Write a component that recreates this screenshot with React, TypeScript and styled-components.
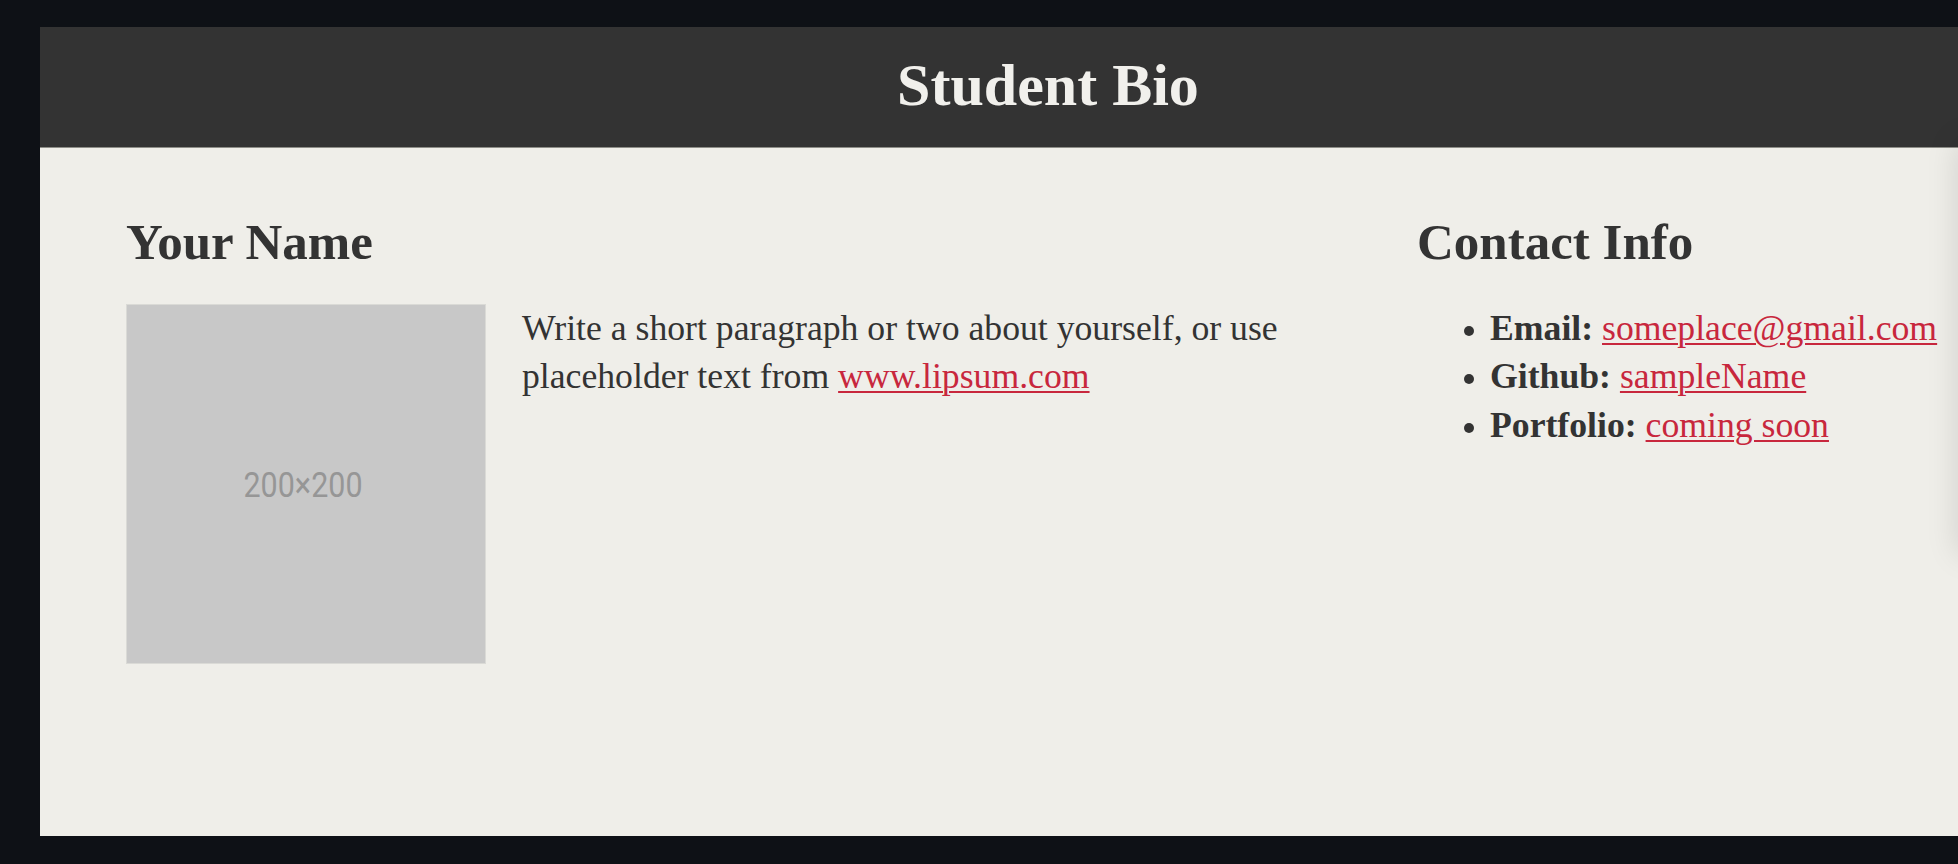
import React from "react";
import styled, { createGlobalStyle } from "styled-components";

const GlobalStyle = createGlobalStyle`
  html, body {
    margin: 0;
    padding: 0;
    background: #0e1116;
    overflow: hidden;
  }
  #root {
    padding: 27px 0 0 40px;
  }
`;

const serif = `"Liberation Serif", "Times New Roman", serif`;

const Panel = styled.div`
  position: relative;
  width: 2016px;
  height: 809px;
  background: #efeee9;
  font-family: ${serif};
  color: #333333;
`;

const Header = styled.header`
  box-sizing: border-box;
  height: 121px;
  padding-bottom: 4px;
  background: #333333;
  border-bottom: 1px solid #8e8e88;
  display: flex;
  align-items: center;
  justify-content: center;
`;

const Title = styled.h1`
  margin: 0;
  font-size: 60px;
  line-height: 60px;
  font-weight: 700;
  color: #f1f0ec;
`;

const Content = styled.main`
  display: grid;
  grid-template-columns: 1291px 1fr;
  padding: 64px 86px 0;
`;

const Column = styled.section`
  display: flex;
  flex-direction: column;
`;

const SectionTitle = styled.h2`
  margin: 0 0 31px;
  font-size: 51px;
  line-height: 61px;
  font-weight: 700;
  color: #333333;
`;

const BioRow = styled.div`
  display: flex;
  align-items: flex-start;
  gap: 36px;
`;

const Photo = styled.svg`
  flex: none;
  display: block;
  width: 360px;
  height: 360px;
`;

const Paragraph = styled.p`
  margin: 0;
  width: 880px;
  font-size: 35.7px;
  line-height: 48px;
  color: #333333;
`;

const Link = styled.a`
  color: #c8273d;
  text-decoration: underline;
  text-decoration-thickness: 2px;
  text-underline-offset: 3px;
`;

const ContactList = styled.ul`
  margin: 0;
  padding-left: 73px;
  font-size: 35.7px;
  line-height: 48.3px;
  list-style: disc;
  color: #333333;
`;

const ContactItem = styled.li`
  &::marker {
    font-size: 32px;
  }
`;

const Label = styled.strong`
  font-weight: 700;
`;

const EdgeShadow = styled.div`
  position: absolute;
  left: 1924px;
  top: 121px;
  width: 200px;
  height: 400px;
  background: #efeee9;
  box-shadow: 0 0 30px 6px rgba(0, 0, 0, 0.13);
`;

export default function App() {
  return (
    <>
      <GlobalStyle />
      <Panel>
        <Header>
          <Title>Student Bio</Title>
        </Header>
        <Content>
          <Column>
            <SectionTitle>Your Name</SectionTitle>
            <BioRow>
              <Photo viewBox="0 0 360 360">
                <rect x="0.5" y="0.5" width="359" height="359" fill="#c8c8c8" stroke="#dadad6" strokeWidth="1" />
                <text
                  x="177"
                  y="193"
                  textAnchor="middle"
                  fontFamily="Roboto, 'DejaVu Sans', sans-serif"
                  fontSize="35"
                  fill="#969696"
                  textLength="119"
                  lengthAdjust="spacingAndGlyphs"
                >
                  200×200
                </text>
              </Photo>
              <Paragraph>
                Write a short paragraph or two about yourself, or use placeholder text from{" "}
                <Link href="#">www.lipsum.com</Link>
              </Paragraph>
            </BioRow>
          </Column>
          <Column>
            <SectionTitle>Contact Info</SectionTitle>
            <ContactList>
              <ContactItem>
                <Label>Email:</Label> <Link href="#">someplace@gmail.com</Link>
              </ContactItem>
              <ContactItem>
                <Label>Github:</Label> <Link href="#">sampleName</Link>
              </ContactItem>
              <ContactItem>
                <Label>Portfolio:</Label> <Link href="#">coming soon</Link>
              </ContactItem>
            </ContactList>
          </Column>
        </Content>
        <EdgeShadow />
      </Panel>
    </>
  );
}
